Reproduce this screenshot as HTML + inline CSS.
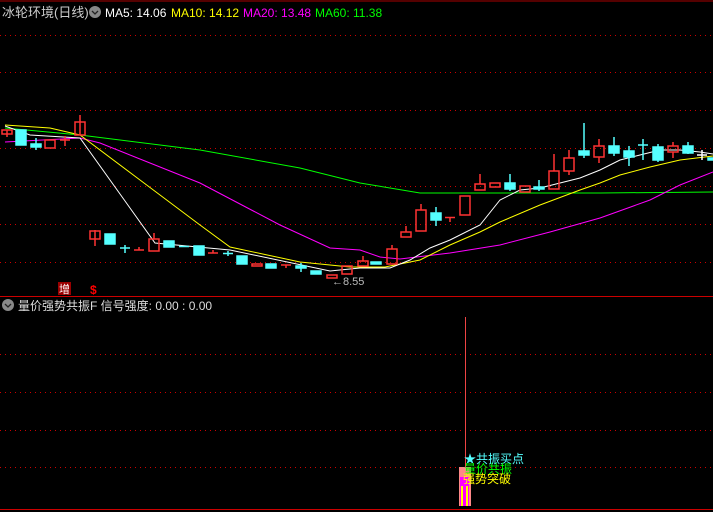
<!DOCTYPE html>
<html><head><meta charset="utf-8"><style>
html,body{margin:0;padding:0;background:#000;width:713px;height:512px;overflow:hidden}
svg{display:block}
text{font-family:"Liberation Sans","Noto Sans CJK SC",sans-serif}
</style></head><body>
<svg width="713" height="512" xmlns="http://www.w3.org/2000/svg">
<rect width="713" height="512" fill="#000"/>
<line x1="0" y1="1" x2="713" y2="1" stroke="#a00" stroke-width="1"/>
<g stroke="#c00" stroke-width="1" stroke-dasharray="1,4">
<line x1="0" y1="35.5" x2="713" y2="35.5"/><line x1="0" y1="72.5" x2="713" y2="72.5"/>
<line x1="0" y1="110.5" x2="713" y2="110.5"/><line x1="0" y1="148.5" x2="713" y2="148.5"/>
<line x1="0" y1="186.5" x2="713" y2="186.5"/><line x1="0" y1="224.5" x2="713" y2="224.5"/>
<line x1="0" y1="262.5" x2="713" y2="262.5"/>
<line x1="0" y1="354.5" x2="713" y2="354.5"/><line x1="0" y1="392.5" x2="713" y2="392.5"/>
<line x1="0" y1="430.5" x2="713" y2="430.5"/><line x1="0" y1="467.5" x2="713" y2="467.5"/>
</g>
<line x1="0" y1="296.5" x2="713" y2="296.5" stroke="#c00"/>
<line x1="0" y1="509.5" x2="713" y2="509.5" stroke="#c00"/>
<text x="2" y="17" fill="#ccc" font-size="13">冰轮环境(日线)</text>
<circle cx="95" cy="12" r="6" fill="#888"/><path d="M92 11l3 3 3-3" stroke="#222" fill="none" stroke-width="1.3"/>
<text x="105" y="17" font-size="12" fill="#fff">MA5: 14.06</text>
<text x="171" y="17" font-size="12" fill="#ff0">MA10: 14.12</text>
<text x="243" y="17" font-size="12" fill="#f0f">MA20: 13.48</text>
<text x="315" y="17" font-size="12" fill="#0f0">MA60: 11.38</text>
<!-- MA lines -->
<polyline fill="none" stroke="#0f0" stroke-width="1" points="5,128 80,135 200,150 300,168 360,183 420,193 500,193 600,193 713,192"/>
<polyline fill="none" stroke="#f0f" stroke-width="1" points="5,142 80,138 100,143 200,183 280,225 330,248 360,250 380,257 400,259 450,253 500,245 550,232 600,218 650,200 680,185 713,172"/>
<polyline fill="none" stroke="#ff0" stroke-width="1" points="5,125 50,128 80,135 140,180 200,225 230,247 300,262 350,267 385,267 420,260 450,245 480,232 500,222 540,205 580,190 600,183 620,175 650,167 680,160 713,156"/>
<polyline fill="none" stroke="#fff" stroke-width="1" points="5,126 30,135 80,138 155,243 230,250 330,271 360,268 390,268 410,260 430,248 450,240 480,225 500,200 520,190 540,188 560,183 580,178 600,170 620,160 640,155 660,150 680,150 700,152 713,154"/>
<!-- candles -->
<g stroke="#f33" fill="none" stroke-width="1.5">
<path d="M7 130v7"/><rect x="2" y="130" width="10" height="4"/>
<rect x="45" y="140" width="10" height="8"/>
<path d="M65 136v10M60 140h10"/>
<path d="M80 115v20"/><rect x="75" y="122" width="10" height="13"/>
<path d="M95 230v16"/><rect x="90" y="231" width="10" height="8"/>
<path d="M134 250h10M139 247v3"/>
<path d="M154 233v6"/><rect x="149" y="239" width="10" height="12"/>
<path d="M208 253h10M213 250v3"/>
<rect x="252" y="264" width="10" height="2"/>
<path d="M281 265h10M286 265v3"/>
<rect x="327" y="275" width="10" height="3"/>
<rect x="342" y="266" width="10" height="8"/>
<path d="M363 256v5"/><rect x="358" y="261" width="10" height="5"/>
<path d="M392 245v4"/><rect x="387" y="249" width="10" height="15"/>
<path d="M406 226v6"/><rect x="401" y="232" width="10" height="5"/>
<path d="M421 204v6"/><rect x="416" y="210" width="10" height="21"/>
<path d="M445 217.5h10M450 218v4"/>
<rect x="460" y="196" width="10" height="19"/>
<path d="M480 174v10"/><rect x="475" y="184" width="10" height="6"/>
<rect x="490" y="183" width="10" height="4"/>
<rect x="520" y="186" width="10" height="6"/>
<path d="M554 154v17"/><rect x="549" y="171" width="10" height="18"/>
<path d="M569 150v8M569 171v4"/><rect x="564" y="158" width="10" height="13"/>
<path d="M599 139v7M599 157v6"/><rect x="594" y="146" width="10" height="11"/>
<path d="M673 142v4M673 152v6"/><rect x="668" y="146" width="10" height="6"/>
</g>
<g fill="#5ff" stroke="#5ff" stroke-width="1.5">
<rect x="16" y="130" width="10" height="15"/>
<path d="M36 138v12"/><rect x="31" y="144" width="10" height="3"/>
<rect x="105" y="234" width="10" height="10"/>
<path d="M125 245v8M120 248h10"/>
<rect x="164" y="241" width="10" height="6"/>
<path d="M179 246.5h10"/>
<rect x="194" y="246" width="10" height="9"/>
<path d="M223 253.5h10M228 251v5"/>
<rect x="237" y="256" width="10" height="8"/>
<rect x="266" y="264" width="10" height="4"/>
<path d="M301 263v9"/><rect x="296" y="266" width="10" height="2"/>
<rect x="311" y="271" width="10" height="3"/>
<rect x="371" y="262" width="10" height="2"/>
<path d="M436 207v19"/><rect x="431" y="213" width="10" height="7"/>
<path d="M510 174v17"/><rect x="505" y="183" width="10" height="6"/>
<path d="M539 180v11"/><rect x="534" y="187" width="10" height="2"/>
<path d="M584 123v35"/><rect x="579" y="151" width="10" height="4"/>
<path d="M614 137v19"/><rect x="609" y="146" width="10" height="7"/>
<path d="M629 146v20"/><rect x="624" y="151" width="10" height="6"/>
<path d="M643 139v21M638 145h10"/>
<path d="M658 144v18"/><rect x="653" y="147" width="10" height="13"/>
<path d="M688 142v12"/><rect x="683" y="146" width="10" height="7"/>
<rect x="708" y="158" width="6" height="2"/>
</g>
<path d="M702 150v10M697 155h10" stroke="#fff" stroke-width="1.5"/>
<text x="332" y="285" font-size="11" fill="#bbb">←8.55</text>
<rect x="58" y="282" width="13" height="13" fill="#900"/>
<text x="59" y="293" font-size="11" fill="#fff">增</text>
<text x="90" y="294" font-size="12" fill="#f00" font-weight="bold">$</text>
<!-- lower panel -->
<circle cx="8" cy="305" r="6" fill="#888"/><path d="M5 304l3 3 3-3" stroke="#222" fill="none" stroke-width="1.3"/>
<text x="18" y="310" font-size="12" fill="#ddd">量价强势共振F  信号强度: 0.00 : 0.00</text>
<line x1="465.5" y1="317" x2="465.5" y2="470" stroke="#e44"/>
<rect x="459" y="467" width="12" height="39" fill="#f88"/>
<rect x="460" y="477" width="9" height="29" fill="#f0f"/>
<rect x="461" y="486" width="2" height="20" fill="#ff0"/>
<rect x="466" y="486" width="2" height="20" fill="#ff0"/>
<text x="464" y="463" font-size="12" fill="#5ff">★共振买点</text>
<text x="464" y="473" font-size="12" fill="#0f0">量价共振</text>
<text x="463" y="483" font-size="12" fill="#ff0">强势突破</text>
</svg>
</body></html>
